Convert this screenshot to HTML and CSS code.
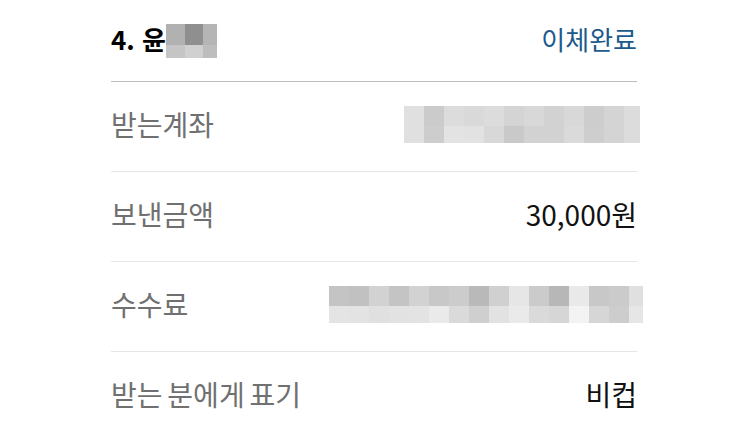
FILE: index.html
```html
<!DOCTYPE html>
<html lang="ko">
<head>
  <meta charset="UTF-8">
  <meta name="viewport" content="width=device-width, initial-scale=1.0">
  <title>이체 결과</title>
  <link rel="stylesheet" href="styles.css">
</head>
<body>
  <div class="transfer-card">
    <!-- 수취인 헤더 -->
    <div class="transfer-head">
      <div class="recipient">
        <span>4. 윤</span>
        <div class="mosaic name-mosaic">
          <i style="background:#b1b1b1"></i><i style="background:#8f8f8f"></i><i style="background:#b5b5b5"></i>
          <i style="background:#c5c5c5"></i><i style="background:#d0d0d0"></i><i style="background:#bdbdbd"></i>
        </div>
      </div>
      <span class="status">이체완료</span>
    </div>

    <!-- 상세 항목 -->
    <div class="detail-row">
      <span class="detail-label">받는계좌</span>
      <div class="mosaic account-mosaic" id="accountMosaic"></div>
    </div>
    <div class="detail-row">
      <span class="detail-label">보낸금액</span>
      <span class="detail-value">30,000원</span>
    </div>
    <div class="detail-row">
      <span class="detail-label">수수료</span>
      <div class="mosaic fee-mosaic" id="feeMosaic"></div>
    </div>
    <div class="detail-row">
      <span class="detail-label">받는 분에게 표기</span>
      <span class="detail-value">비컵</span>
    </div>
  </div>

  <script>
    // 가려진 영역 (모자이크) 색상
    const accountCells = [
      'e0','cb','dc','d9','dc','d4','d8','d2','d8','cd','d4','dc',
      'e0','cd','e3','e2','d8','c9','d2','d2','da','ce','d4','dc'
    ];
    const feeCells = [
      'c4','c1','d2','c4','d2','c8','cc','b9','d0','e6','cb','b7','e9','c8','cb','e0',
      'e4','e3','e0','e2','e3','ea','da','cf','e2','ea','da','d6','f3','d6','cd','e6'
    ];

    function renderMosaic(id, cells) {
      const box = document.getElementById(id);
      cells.forEach(c => {
        const cell = document.createElement('i');
        cell.style.background = `#${c}${c}${c}`;
        box.appendChild(cell);
      });
    }

    renderMosaic('accountMosaic', accountCells);
    renderMosaic('feeMosaic', feeCells);
  </script>
</body>
</html>
```

FILE: styles.css
```css
body {
  margin: 0;
  background: #ffffff;
  font-family: "Noto Sans CJK KR", "Noto Sans", sans-serif;
}

.transfer-card {
  width: 526px;
  margin-left: 111px;
}

.transfer-head {
  display: flex;
  justify-content: space-between;
  align-items: center;
  height: 81px;
  border-bottom: 1px solid #bdbdbd;
}

.recipient {
  display: flex;
  align-items: center;
  font-size: 26px;
  font-weight: 700;
  color: #000000;
  margin-top: -4px;
}

.status {
  font-size: 26px;
  color: #1c5a8b;
  margin-top: -5px;
}

.detail-row {
  display: flex;
  justify-content: space-between;
  align-items: center;
  height: 89px;
  border-bottom: 1px solid #e6e6e6;
}

.detail-row:last-child {
  border-bottom: none;
}

.detail-label {
  font-size: 28px;
  word-spacing: -3px;
  color: #707070;
  margin-top: -6px;
}

.detail-value {
  font-size: 28px;
  color: #111111;
  margin-top: -6px;
}

.mosaic {
  display: grid;
}

.mosaic i {
  display: block;
}

.name-mosaic {
  grid-template-columns: 19px 18px 14px;
  grid-template-rows: 21px 13px;
  margin-top: 4px;
}

.account-mosaic {
  grid-template-columns: repeat(11, 20px) 16px;
  grid-template-rows: 20px 17px;
  margin-right: -3px;
  margin-top: -4px;
}

.fee-mosaic {
  grid-template-columns: repeat(15, 20px) 14px;
  grid-template-rows: 20px 17px;
  margin-right: -6px;
  margin-top: -4px;
}
```
